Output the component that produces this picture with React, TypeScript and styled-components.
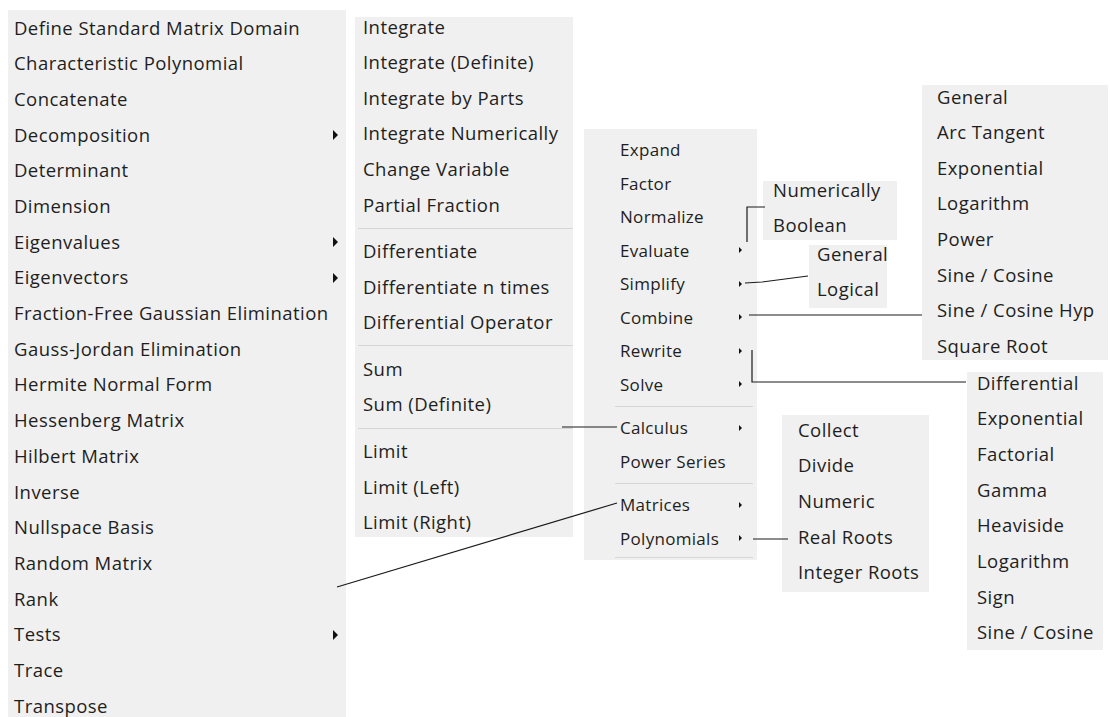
import React from "react";
import styled, { createGlobalStyle } from "styled-components";

const Global = createGlobalStyle`
  html, body { margin: 0; padding: 0; background: #ffffff; overflow: hidden; }
  body { font-family: "Open Sans", "Noto Sans", sans-serif; color: #1e1e1e; }
`;

const Canvas = styled.div`
  position: relative;
  width: 1110px;
  height: 717px;
  overflow: hidden;
  background: #ffffff;
`;

const Menu = styled.div<{ $x: number; $y: number; $w: number; $h: number }>`
  position: absolute;
  left: ${(p) => p.$x}px;
  top: ${(p) => p.$y}px;
  width: ${(p) => p.$w}px;
  height: ${(p) => p.$h}px;
  background: #f0f0f0;
`;

const List = styled.div<{ $shift: number; $pl: number; $pr: number; $fs: number; $ls: number }>`
  display: flex;
  flex-direction: column;
  margin-top: ${(p) => p.$shift}px;
  padding-left: ${(p) => p.$pl}px;
  padding-right: ${(p) => p.$pr}px;
  font-size: ${(p) => p.$fs}px;
  letter-spacing: ${(p) => p.$ls}px;
`;

const Item = styled.div<{ $h: number }>`
  height: ${(p) => p.$h}px;
  flex: none;
  display: flex;
  align-items: center;
  justify-content: space-between;
  line-height: 1;
  white-space: nowrap;
`;

const Arrow = styled.span<{ $s: number }>`
  width: 0;
  height: 0;
  border-top: ${(p) => p.$s}px solid transparent;
  border-bottom: ${(p) => p.$s}px solid transparent;
  border-left: ${(p) => p.$s}px solid #111;
  flex: none;
`;

const Sep = styled.div<{ $ml: number; $mr: number; $my: number }>`
  height: 1px;
  flex: none;
  background: #d6d6d6;
  margin: ${(p) => p.$my}px ${(p) => p.$mr}px ${(p) => p.$my}px ${(p) => p.$ml}px;
`;

const Lines = styled.svg`
  position: absolute;
  left: 0;
  top: 0;
  width: 1110px;
  height: 717px;
  pointer-events: none;
`;

type Entry = string | { t: string; sub?: boolean };

interface MenuSpec {
  x: number;
  y: number;
  w: number;
  h: number;
  shift: number;
  pl: number;
  pr: number;
  ih: number;
  fs: number;
  ls: number;
  arrow?: number;
  sep?: { ml: number; mr: number; my: number };
  items: Entry[];
}

const menus: MenuSpec[] = [
  {
    x: 8, y: 10, w: 338, h: 707, shift: 0, pl: 6, pr: 8, ih: 35.7, fs: 18.5, ls: 0.45, arrow: 5,
    items: [
      "Define Standard Matrix Domain",
      "Characteristic Polynomial",
      "Concatenate",
      { t: "Decomposition", sub: true },
      "Determinant",
      "Dimension",
      { t: "Eigenvalues", sub: true },
      { t: "Eigenvectors", sub: true },
      "Fraction-Free Gaussian Elimination",
      "Gauss-Jordan Elimination",
      "Hermite Normal Form",
      "Hessenberg Matrix",
      "Hilbert Matrix",
      "Inverse",
      "Nullspace Basis",
      "Random Matrix",
      "Rank",
      { t: "Tests", sub: true },
      "Trace",
      "Transpose",
    ],
  },
  {
    x: 355, y: 17, w: 218, h: 520, shift: -8, pl: 8, pr: 0, ih: 35.6, fs: 18.5, ls: 0.45,
    sep: { ml: -5, mr: 0, my: 5 },
    items: [
      "Integrate",
      "Integrate (Definite)",
      "Integrate by Parts",
      "Integrate Numerically",
      "Change Variable",
      "Partial Fraction",
      "-",
      "Differentiate",
      "Differentiate n times",
      "Differential Operator",
      "-",
      "Sum",
      "Sum (Definite)",
      "-",
      "Limit",
      "Limit (Left)",
      "Limit (Right)",
    ],
  },
  {
    x: 584, y: 129, w: 173, h: 431, shift: 4, pl: 36, pr: 15, ih: 33.5, fs: 17, ls: 0.3, arrow: 3.5,
    sep: { ml: -5, mr: -11, my: 4.5 },
    items: [
      "Expand",
      "Factor",
      "Normalize",
      { t: "Evaluate", sub: true },
      { t: "Simplify", sub: true },
      { t: "Combine", sub: true },
      { t: "Rewrite", sub: true },
      { t: "Solve", sub: true },
      "-",
      { t: "Calculus", sub: true },
      "Power Series",
      "-",
      { t: "Matrices", sub: true },
      { t: "Polynomials", sub: true },
      "_",
    ],
  },
  {
    x: 763, y: 181, w: 134, h: 59, shift: -8, pl: 10, pr: 0, ih: 35, fs: 18.5, ls: 0.45,
    items: ["Numerically", "Boolean"],
  },
  {
    x: 809, y: 245, w: 78, h: 63, shift: -8, pl: 8, pr: 0, ih: 35, fs: 18.5, ls: 0.45,
    items: ["General", "Logical"],
  },
  {
    x: 922, y: 85, w: 186, h: 275, shift: -6, pl: 15, pr: 0, ih: 35.6, fs: 18.5, ls: 0.45,
    items: [
      "General",
      "Arc Tangent",
      "Exponential",
      "Logarithm",
      "Power",
      "Sine / Cosine",
      "Sine / Cosine Hyp",
      "Square Root",
    ],
  },
  {
    x: 967, y: 372, w: 136, h: 278, shift: -7, pl: 10, pr: 0, ih: 35.7, fs: 18.5, ls: 0.45,
    items: [
      "Differential",
      "Exponential",
      "Factorial",
      "Gamma",
      "Heaviside",
      "Logarithm",
      "Sign",
      "Sine / Cosine",
    ],
  },
  {
    x: 782, y: 415, w: 147, h: 177, shift: -3, pl: 16, pr: 0, ih: 35.7, fs: 18.5, ls: 0.45,
    items: ["Collect", "Divide", "Numeric", "Real Roots", "Integer Roots"],
  },
];

function MenuBox({ m }: { m: MenuSpec }) {
  return (
    <Menu $x={m.x} $y={m.y} $w={m.w} $h={m.h}>
      <List $shift={m.shift} $pl={m.pl} $pr={m.pr} $fs={m.fs} $ls={m.ls}>
        {m.items.map((it, i) => {
          if (it === "-" || it === "_") {
            const s = m.sep ?? { ml: 0, mr: 0, my: 5 };
            return <Sep key={i} $ml={s.ml} $mr={s.mr} $my={it === "_" ? 1.5 : s.my} />;
          }
          const t = typeof it === "string" ? it : it.t;
          const sub = typeof it === "string" ? false : !!it.sub;
          return (
            <Item key={i} $h={m.ih}>
              <span>{t}</span>
              {sub && <Arrow $s={m.arrow ?? 4} />}
            </Item>
          );
        })}
      </List>
    </Menu>
  );
}

export default function App() {
  return (
    <Canvas>
      <Global />
      {menus.map((m, i) => (
        <MenuBox key={i} m={m} />
      ))}
      <Lines viewBox="0 0 1110 717">
        <g stroke="#1a1a1a" strokeWidth={1.2} fill="none">
          <line x1={337} y1={587} x2={617} y2={503} />
          <line x1={562} y1={427} x2={617} y2={427} />
          <polyline points="747,242 747,207 765,207" />
          <polyline points="745,283 762,282 808,276" />
          <line x1={749} y1={315} x2={922} y2={315} />
          <polyline points="752,350 752,382 966,382" />
          <line x1={753} y1={539} x2={788} y2={539} />
        </g>
      </Lines>
    </Canvas>
  );
}
